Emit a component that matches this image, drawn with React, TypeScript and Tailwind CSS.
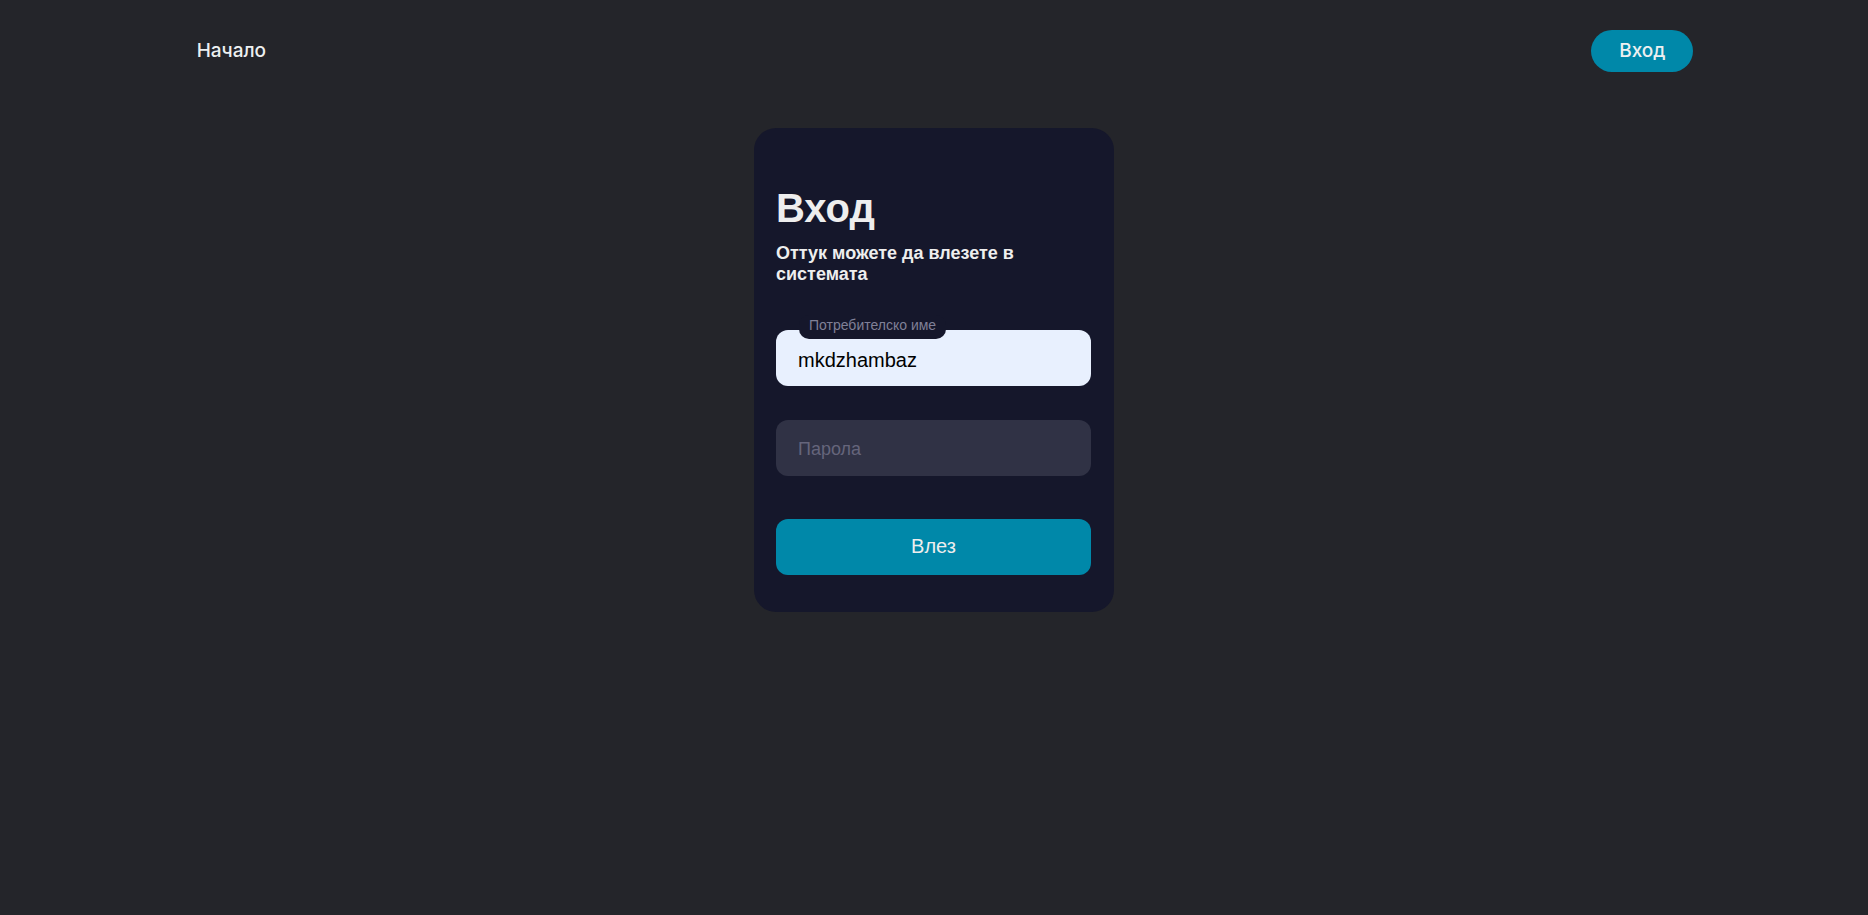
export default function App() {
  return (
    <div className="min-h-screen bg-[#24252a] font-['Liberation_Sans',Arial,sans-serif] text-[#eeeeee]">
      <header className="flex items-center justify-between px-[9.35%] py-[30px]">
        <nav className="pl-[22px]">
          <a href="#" className="font-['Inter',sans-serif] text-[19px] leading-[42px] font-medium text-[#edf0f1]">
            Начало
          </a>
        </nav>
        <button
          type="button"
          className="h-[42px] w-[102px] rounded-full bg-[#0088a9] font-['Inter',sans-serif] text-[19px] font-medium text-[#edf0f1]"
        >
          Вход
        </button>
      </header>

      <main className="flex justify-center pt-[26px]">
        <form className="flex w-[360px] flex-col rounded-[22px] bg-[#15172b] pt-[56px] pr-[23px] pb-[37px] pl-[22px]">
          <h1 className="text-[40px] leading-[48px] font-bold">Вход</h1>
          <p className="mt-[11px] text-lg leading-[21px] font-bold">Оттук можете да влезете в системата</p>

          <div className="relative mt-[45px]">
            <input
              id="username"
              type="text"
              defaultValue="mkdzhambaz"
              className="block h-[56px] w-full rounded-xl bg-[#e8f0fe] px-[22px] pt-1 text-xl text-black outline-none"
            />
            <label
              htmlFor="username"
              className="absolute -top-[15px] left-[23px] rounded-[10px] bg-[#15172b] px-[10px] pb-1 text-sm leading-5 text-[#808097]"
            >
              Потребителско име
            </label>
          </div>

          <input
            type="password"
            aria-label="Парола"
            placeholder="Парола"
            className="mt-[34px] block h-[56px] w-full rounded-xl bg-[#303245] px-[22px] pt-0.5 text-lg text-[#eeeeee] outline-none placeholder:text-[#65657b]"
          />

          <button type="submit" className="mt-[43px] h-[56px] w-full rounded-xl bg-[#0088a9] pb-0.5 text-xl">
            Влез
          </button>
        </form>
      </main>
    </div>
  );
}
